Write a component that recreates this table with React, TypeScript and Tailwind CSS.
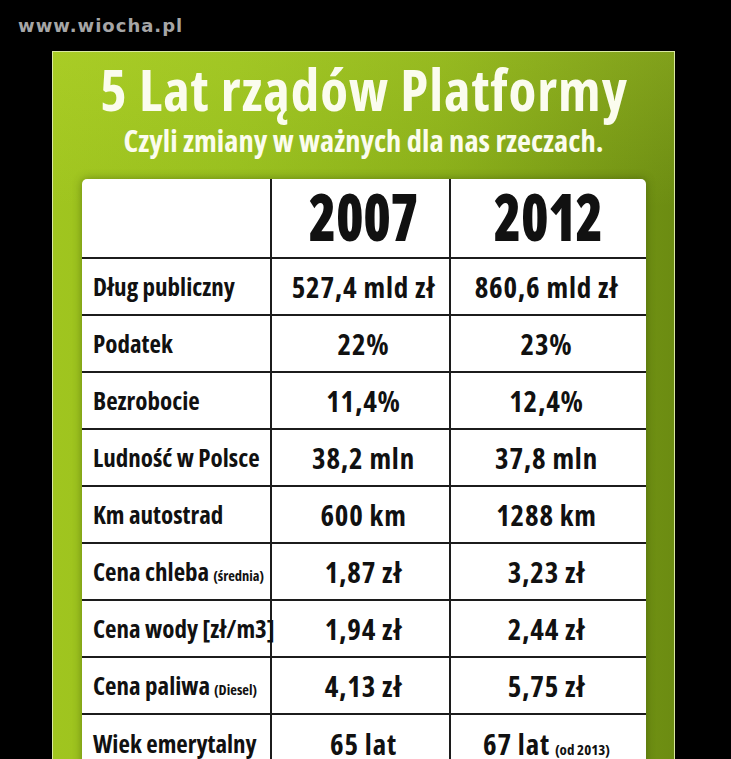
import React from "react";

const FONT = { fontFamily: '"Open Sans", "Noto Sans", "DejaVu Sans", sans-serif' };

type Row = { label: string; note?: string; a: string; b: string; bNote?: string };

const rows: Row[] = [
  { label: "Dług publiczny", a: "527,4 mld zł", b: "860,6 mld zł" },
  { label: "Podatek", a: "22%", b: "23%" },
  { label: "Bezrobocie", a: "11,4%", b: "12,4%" },
  { label: "Ludność w Polsce", a: "38,2 mln", b: "37,8 mln" },
  { label: "Km autostrad", a: "600 km", b: "1288 km" },
  { label: "Cena chleba", note: "(średnia)", a: "1,87 zł", b: "3,23 zł" },
  { label: "Cena wody [zł/m3]", a: "1,94 zł", b: "2,44 zł" },
  { label: "Cena paliwa", note: "(Diesel)", a: "4,13 zł", b: "5,75 zł" },
  { label: "Wiek emerytalny", a: "65 lat", b: "67 lat", bNote: "(od 2013)" },
];

export default function App() {
  return (
    <div className="w-[731px] h-[759px] bg-black overflow-hidden font-stretch-condensed" style={FONT}>
      <div
        className="h-[51px] pl-[18px] pt-[17px] text-[18px] font-bold leading-none tracking-[1px] text-[#a6a6a6] font-stretch-normal"
        style={{ fontFamily: '"DejaVu Sans", sans-serif' }}
      >
        www.wiocha.pl
      </div>
      <div className="ml-[52px] w-[623px] h-[708px] border-t border-l border-r border-[#d9e8a0] bg-[linear-gradient(180deg,rgba(200,230,60,0.22)_0%,rgba(200,230,60,0)_22%),linear-gradient(90deg,#a0c51f_0%,#97be1e_30%,#89ae19_62%,#6c8c12_100%)]">
        <div className="h-[127px] flex flex-col items-center text-[#fbfcee]">
          <div className="mt-[9px] pl-[1px] text-[57px] font-bold leading-none tracking-[1px]">
            5 Lat rządów Platformy
          </div>
          <div className="mt-[7px] text-[30.5px] font-bold leading-none">
            Czyli zmiany w ważnych dla nas rzeczach.
          </div>
        </div>
        <div className="ml-[29px] w-[564px] bg-white rounded-t-[5px] shadow-[0_0_10px_rgba(40,60,0,0.45)] text-[#111]">
          <div className="flex h-[80px] border-b-2 border-[#1c1c1c]">
            <div className="w-[190px] border-r-2 border-[#1c1c1c]" />
            <div className="w-[179px] border-r-2 border-[#1c1c1c] flex items-center justify-center pb-[4px] pl-[6px]">
              <span className="inline-block scale-x-[0.86] text-[65px] font-extrabold leading-none tracking-[-0.5px]">
                2007
              </span>
            </div>
            <div className="flex-1 flex items-center justify-center pb-[4px]">
              <span className="inline-block scale-x-[0.86] text-[65px] font-extrabold leading-none tracking-[-0.5px]">
                2012
              </span>
            </div>
          </div>
          {rows.map((r, i) => (
            <div
              key={i}
              className={"flex h-[57px] " + (i < rows.length - 1 ? "border-b-2 border-[#1c1c1c]" : "")}
            >
              <div className="w-[190px] border-r-2 border-[#1c1c1c] flex items-center pl-[11px] text-[25px] font-bold leading-none whitespace-nowrap">
                <span>
                  {r.label}
                  {r.note && <span className="ml-[4px] text-[14.5px]">{r.note}</span>}
                </span>
              </div>
              <div className="w-[179px] border-r-2 border-[#1c1c1c] flex items-center justify-center pl-[6px] text-[29px] font-bold leading-none tracking-[0.8px]">
                {r.a}
              </div>
              <div className="flex-1 flex items-center justify-center pr-[4px] text-[29px] font-bold leading-none tracking-[0.8px]">
                <span>
                  {r.b}
                  {r.bNote && <span className="ml-[5px] text-[15px] tracking-normal">{r.bNote}</span>}
                </span>
              </div>
            </div>
          ))}
        </div>
      </div>
    </div>
  );
}
